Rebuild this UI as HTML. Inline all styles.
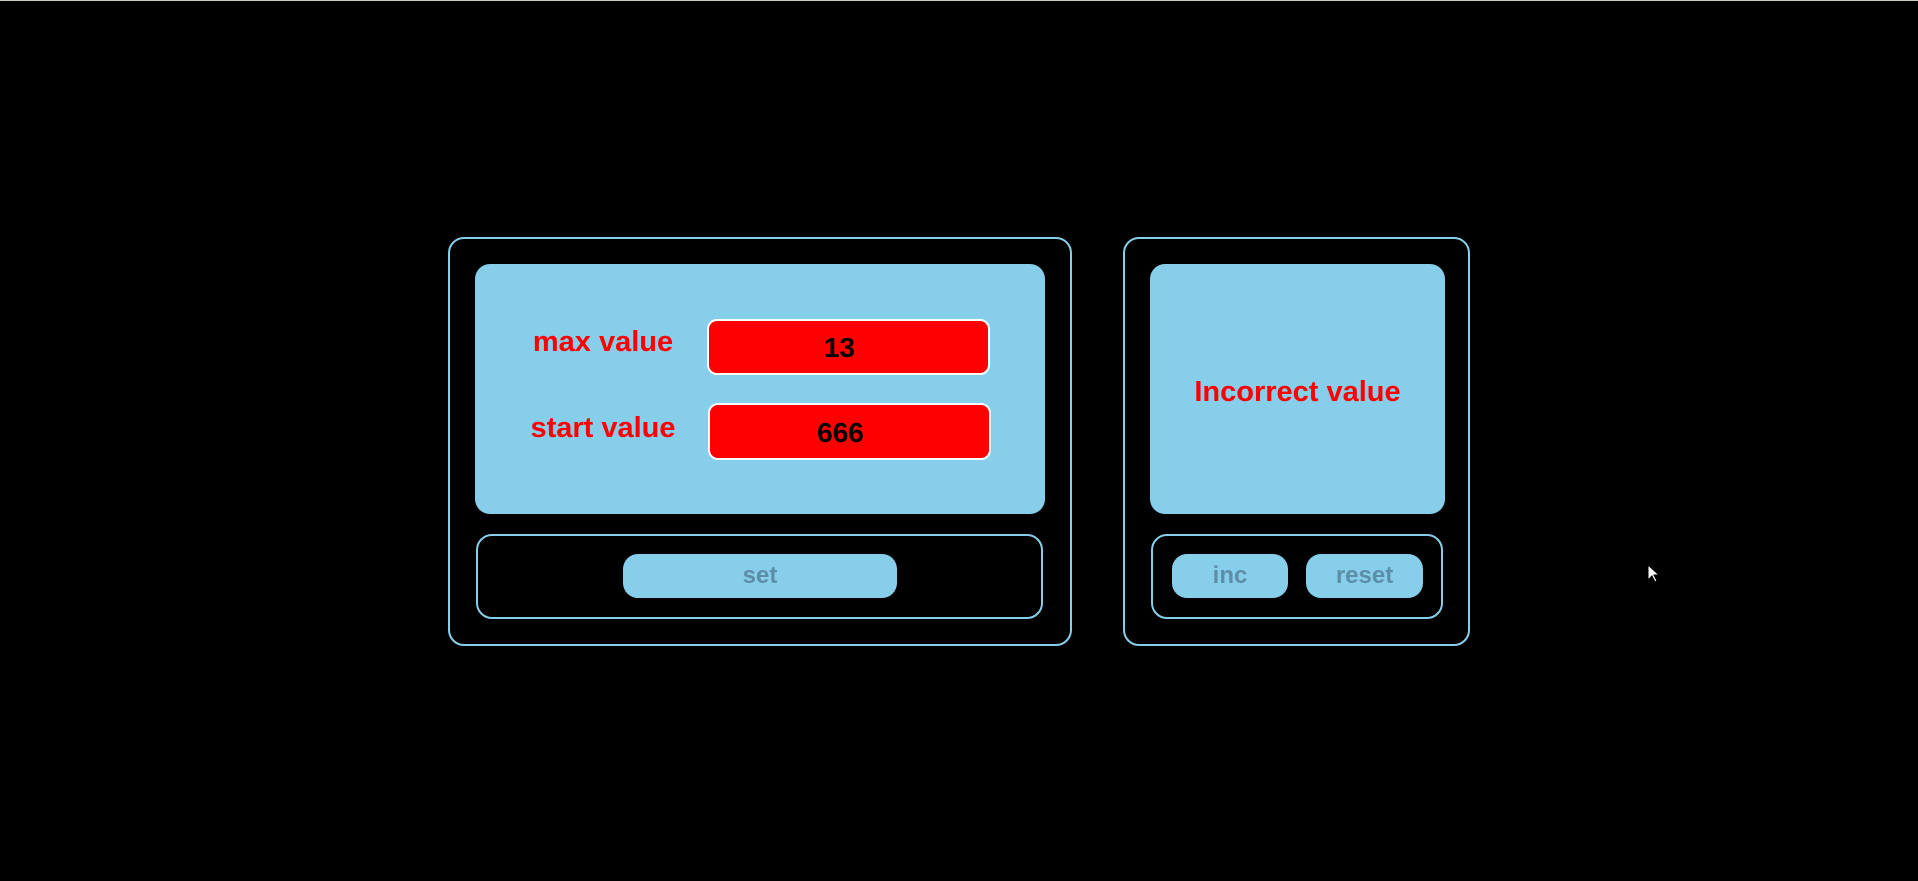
<!DOCTYPE html>
<html><head><meta charset="utf-8"><style>
html,body{margin:0;padding:0;}
body{width:1918px;height:881px;background:#000;position:relative;overflow:hidden;font-family:"Liberation Sans",sans-serif;border-top:1px solid #c8cfc0;box-sizing:border-box;}
.a{position:absolute;box-sizing:border-box;}
.outer{border:2px solid #87ceeb;border-radius:16px;}
.blue{background:#87ceeb;border-radius:15px;}
.inp{background:#f00;border:2px solid #fff;border-radius:10px;color:#000;font-weight:bold;font-size:28px;display:flex;align-items:center;justify-content:center;padding-right:18px;padding-top:2px;}
.lbl{color:#f00;font-weight:bold;font-size:29px;text-align:center;white-space:nowrap;}
.btn{background:#87ceeb;border-radius:15px;color:#5d8ea8;font-weight:bold;font-size:24px;display:flex;align-items:center;justify-content:center;}
</style></head><body>
<div class="a outer" style="left:448px;top:236px;width:624px;height:409px;"></div>
<div class="a blue" style="left:475px;top:263px;width:570px;height:250px;"></div>
<div class="a lbl" style="left:503px;top:325px;width:200px;">max value</div>
<div class="a lbl" style="left:503px;top:411px;width:200px;">start value</div>
<div class="a inp" style="left:707px;top:318px;width:283px;height:56px;">13</div>
<div class="a inp" style="left:708px;top:402px;width:283px;height:57px;">666</div>
<div class="a outer" style="left:476px;top:533px;width:567px;height:85px;"></div>
<div class="a btn" style="left:623px;top:553px;width:274px;height:44px;">set</div>

<div class="a outer" style="left:1123px;top:236px;width:347px;height:409px;"></div>
<div class="a blue" style="left:1150px;top:263px;width:295px;height:250px;"></div>
<div class="a lbl" style="left:1150px;top:375px;width:295px;">Incorrect value</div>
<div class="a outer" style="left:1151px;top:533px;width:292px;height:85px;"></div>
<div class="a btn" style="left:1172px;top:553px;width:116px;height:44px;">inc</div>
<div class="a btn" style="left:1306px;top:553px;width:117px;height:44px;">reset</div>
<svg class="a" style="left:1647px;top:563px" width="14" height="20"><path d="M1 1 L1 16 L5 12 L8 18 L10 17 L7 11 L12 11 Z" fill="#fff" stroke="#000" stroke-width="1"/></svg>
</body></html>
